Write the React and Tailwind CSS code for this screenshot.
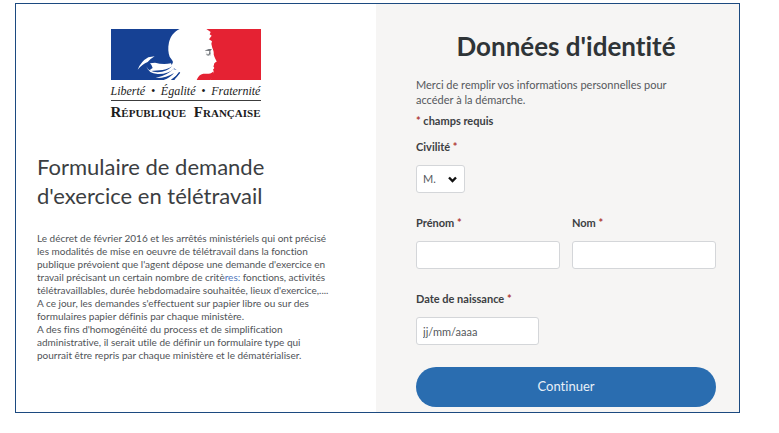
import React, { useState } from 'react';

const RequiredMark = () => <span className="text-[#b03a38]">*</span>;

const Field = ({ id, label, children }) => (
  <div>
    <label htmlFor={id} className="block text-[11px] leading-[15px] font-bold text-[#3c4043]">
      {label} <RequiredMark />
    </label>
    <div className="mt-[11px]">{children}</div>
  </div>
);

const MarianneFlag = () => (
  <svg viewBox="0 0 450 153" className="block w-full" aria-hidden="true">
    <path
      fill="#164194"
      d="M0 0H206C190 7 178 22 174 40C170 58 172 72 176 83C179 89 184 91 186 99L181 112L206 130L190 153H0Z"
    />
    <path
      fill="#e52233"
      d="M286 0H450V153H297C301 149 306 138 308 126L306 122L310 117L307 112L309 108C308 103 311 101 317 98C316 94 309 84 308 76C309 69 307 64 304 57L301 44L303 37L294 31L302 20L296 16L299 9Z"
    />
    <path
      fill="#e52233"
      d="M257 153C261 143 267 135 277 134C287 134 299 136 306 128L309 139L298 153Z"
    />
    {/* Collar folds */}
    <path fill="#fff" d="M80 122Q90 97 112 85L131 82Q116 91 110 99Q94 105 80 122Z" />
    <path fill="#fff" d="M117 103L132 101Q156 108 180 103L184 112Q164 124 146 124L119 126Q113 123 125 117Q123 108 117 103Z" />
    <path fill="#fff" d="M106 112Q112 129 140 130Q168 128 184 111L191 117Q172 136 140 135Q112 134 106 112Z" />
    <path fill="#fff" d="M134 147Q170 139 186 120L208 125Q198 142 180 153H158Q178 146 189 132Q165 148 134 147Z" />
    <path fill="none" stroke="#164194" strokeWidth="4" d="M182 153Q196 146 206 130" />
    {/* Eye */}
    <path fill="#71757a" d="M281 65C288 60 295 59 303 60L298 66L299 76L292 80L284 77L294 74L295 66Z" />
    <path fill="none" stroke="#b5b8bb" strokeWidth="2" d="M284 70L291 77L299 79" />
  </svg>
);

const Logo = () => (
  <div className="mx-auto w-[150px] font-['Liberation_Serif',serif] text-[#1c1c1c]">
    <MarianneFlag />
    <div className="mt-1 flex justify-between whitespace-nowrap text-[12px] leading-[14px] italic">
      <span>Liberté</span>
      <span>•</span>
      <span>Égalité</span>
      <span>•</span>
      <span>Fraternité</span>
    </div>
    <div className="mt-0.5 border-t border-[#3c3c3c]" />
    <div className="mt-[3px] flex justify-between whitespace-nowrap text-[11px] leading-4 font-bold">
      <span>
        <span className="text-[15px]">R</span>ÉPUBLIQUE
      </span>
      <span>
        <span className="text-[15px]">F</span>RANÇAISE
      </span>
    </div>
  </div>
);

const inputClass =
  'block h-7 rounded-[3px] border border-[#d4d6d9] bg-white px-1.5 text-[11px] text-[#55585c] placeholder:text-[#55585c] placeholder:opacity-100';

const App = () => {
  const [form, setForm] = useState({ civilite: 'M.', prenom: '', nom: '', naissance: '' });

  const handleChange = (e) => {
    setForm({ ...form, [e.target.name]: e.target.value });
  };

  return (
    <div className="bg-white pt-[3px] pr-[39px] pb-5 pl-[15px] font-['Lato',sans-serif] [font-variant-ligatures:none]">
      <main className="grid grid-cols-[360fr_363fr] border border-[#1c4a80]">
        {/* Presentation */}
        <section className="px-[21px] pt-[25px]">
          <div className="pr-[21px]">
            <Logo />
          </div>
          <h1 className="mt-[31px] text-[22px] leading-[29px] whitespace-nowrap text-[#3b3e42]">
            Formulaire de demande
            <br />
            d'exercice en télétravail
          </h1>
          <p className="mt-[22px] text-[10px] leading-[13px] whitespace-nowrap text-[#505357]">
            Le décret de février 2016 et les arrêtés ministériels qui ont précisé
            <br />
            les modalités de mise en oeuvre de télétravail dans la fonction
            <br />
            publique prévoient que l'agent dépose une demande d'exercice en
            <br />
            travail précisant un certain nombre de critè<span className="text-[#4f78bd]">res:</span> fonctions, activités
            <br />
            télétravaillables, durée hebdomadaire souhaitée, lieux d'exercice,....
            <br />
            A ce jour, les demandes s'effectuent sur papier libre ou sur des
            <br />
            formulaires papier définis par chaque ministère.
            <br />
            A des fins d'homogénéité du process et de simplification
            <br />
            administrative, il serait utile de définir un formulaire type qui
            <br />
            pourrait être repris par chaque ministère et le dématérialiser.
          </p>
        </section>

        {/* Identity form */}
        <section className="bg-[#f6f5f4] pt-[26px] pr-[23px] pb-[5px] pl-10">
          <h2 className="text-center text-[26px] leading-8 font-bold text-[#2f3437]">Données d'identité</h2>
          <p className="mt-[15px] text-[11px] leading-[15px] text-[#55585c]">
            Merci de remplir vos informations personnelles pour
            <br />
            accéder à la démarche.
          </p>
          <p className="mt-1.5 text-[11px] leading-[15px] font-bold text-[#3c4043]">
            <RequiredMark /> champs requis
          </p>

          <form className="mt-[11px]" onSubmit={(e) => e.preventDefault()}>
            <Field id="civilite" label="Civilité">
              <div className="relative w-[49px]">
                <select
                  id="civilite"
                  name="civilite"
                  value={form.civilite}
                  onChange={handleChange}
                  className={`${inputClass} w-full appearance-none`}
                >
                  <option value="M.">M.</option>
                  <option value="Mme">Mme</option>
                </select>
                <svg
                  viewBox="0 0 9 7"
                  className="pointer-events-none absolute top-[11px] right-2 w-[9px]"
                  aria-hidden="true"
                >
                  <path d="M1 1.5L4.5 5L8 1.5" fill="none" stroke="#111" strokeWidth="2.4" />
                </svg>
              </div>
            </Field>

            <div className="mt-[22px] grid grid-cols-2 gap-3">
              <Field id="prenom" label="Prénom">
                <input
                  id="prenom"
                  name="prenom"
                  type="text"
                  value={form.prenom}
                  onChange={handleChange}
                  className={`${inputClass} w-full`}
                />
              </Field>
              <Field id="nom" label="Nom">
                <input
                  id="nom"
                  name="nom"
                  type="text"
                  value={form.nom}
                  onChange={handleChange}
                  className={`${inputClass} w-full`}
                />
              </Field>
            </div>

            <div className="mt-[22px]">
              <Field id="naissance" label="Date de naissance">
                <input
                  id="naissance"
                  name="naissance"
                  type="text"
                  placeholder="jj/mm/aaaa"
                  value={form.naissance}
                  onChange={handleChange}
                  className={`${inputClass} w-[123px]`}
                />
              </Field>
            </div>

            <button
              type="submit"
              className="mt-[22px] block h-10 w-full rounded-full bg-[#2a6db0] text-[13px] text-[#e8f0f8]"
            >
              Continuer
            </button>
          </form>
        </section>
      </main>
    </div>
  );
};

export default App;
